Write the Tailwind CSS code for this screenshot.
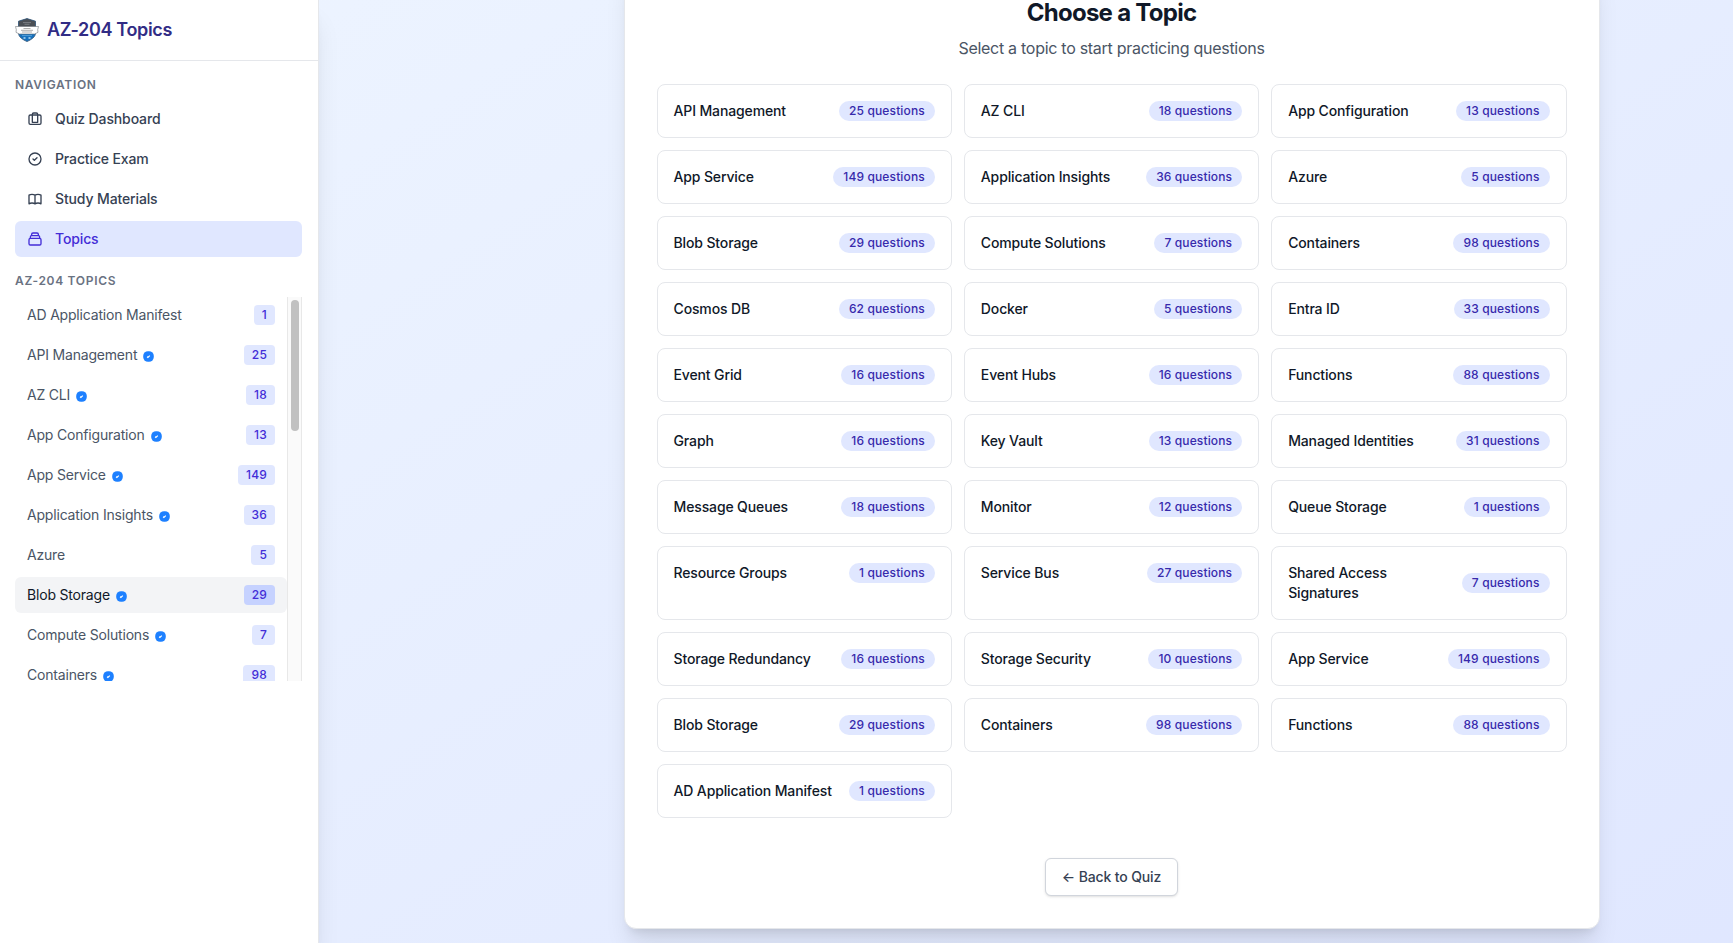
<!DOCTYPE html>
<html lang="en">
<head>
<meta charset="utf-8">
<title>AZ-204 Topics</title>
<script src="https://cdn.jsdelivr.net/npm/@tailwindcss/browser@4"></script>
</head>
<body class="h-[943px] overflow-hidden bg-linear-to-br from-blue-50 to-indigo-100 bg-[length:1733px_1150px] bg-bottom font-['Inter',sans-serif] antialiased">
<div class="flex h-full">
  <aside class="w-[319px] shrink-0 border-r border-gray-200 bg-white shadow-xl">
    <header class="flex h-[61px] items-center gap-2 border-b border-gray-200 px-[15px]">
      <svg class="size-6" viewBox="0 0 24 24">
        <path d="M3.5 3.2 12 .6l8.500 2.600V15c0 4-4 6.500-8.500 8.600C7.500 21.500 3.500 19 3.500 15z" fill="#1671bd"/>
        <path d="M3.500 3.200 12 .6l8.500 2.600V9h-17z" fill="#4b4f55"/>
        <path d="M3.500 3.200 12 .6l8.500 2.600V15c0 4-4 6.500-8.500 8.600C7.500 21.500 3.500 19 3.500 15z" fill="none" stroke="#3c5b78" stroke-width=".8"/>
        <path d="M8 4.600h8M9.500 6.300h5" stroke="#85898e" stroke-width=".8"/>
        <path d="M.5 8.500h23l-.8 3.200.3 2.600-3.200 1.700H4.200L1 14.300l.3-2.600z" fill="#fff" stroke="#70757b" stroke-width=".6"/>
        <path d="M8.500 10.500h7M6 12.300h12M7 14h10" stroke="#8d8d8d" stroke-width=".7"/>
        <path d="M7 17.600h10" stroke="#6eb4e8" stroke-width=".7"/>
        <path d="M8.500 20h2M13.500 20h2" stroke="#b5ddf8" stroke-width="1.500"/>
      </svg>
      <h1 class="text-lg font-semibold tracking-[-0.34px] text-indigo-900">AZ-204 Topics</h1>
    </header>
    <div class="py-4 pr-4 pl-[15px]">
      <h2 class="mb-2 text-xs font-semibold tracking-[0.67px] text-gray-500">NAVIGATION</h2>
      <nav class="flex flex-col gap-1 text-sm font-medium tracking-[-0.13px] text-gray-700">
        <a class="flex h-9 items-center gap-3 rounded-md px-3"><svg class="size-4" viewBox="0 0 24 24" fill="none" stroke="currentColor" stroke-width="2" stroke-linecap="round" stroke-linejoin="round"><path d="M5 6a2 2 0 0 0-2 2v10a2 2 0 0 0 2 2h14a2 2 0 0 0 2-2V8a2 2 0 0 0-2-2M8 6V5a2 2 0 0 1 2-2h4a2 2 0 0 1 2 2v12H8zM5 6h14"/></svg>Quiz Dashboard</a>
        <a class="flex h-9 items-center gap-3 rounded-md px-3"><svg class="size-4" viewBox="0 0 24 24" fill="none" stroke="currentColor" stroke-width="2" stroke-linecap="round" stroke-linejoin="round"><path d="m9 12 2 2 4-4m6 2a9 9 0 1 1-18 0 9 9 0 0 1 18 0z"/></svg>Practice Exam</a>
        <a class="flex h-9 items-center gap-3 rounded-md px-3"><svg class="size-4" viewBox="0 0 24 24" fill="none" stroke="currentColor" stroke-width="2" stroke-linecap="round" stroke-linejoin="round"><path d="M12 6.253v13m0-13C10.832 5.477 9.246 5 7.500 5S4.168 5.477 3 6.253v13C4.168 18.477 5.754 18 7.500 18s3.332.477 4.500 1.253m0-13C13.168 5.477 14.754 5 16.500 5s3.332.477 4.500 1.253v13C19.832 18.477 18.247 18 16.500 18s-3.332.477-4.500 1.253"/></svg>Study Materials</a>
        <a class="flex h-9 items-center gap-3 rounded-md bg-indigo-100 px-3 text-indigo-700"><svg class="size-4" viewBox="0 0 24 24" fill="none" stroke="currentColor" stroke-width="2" stroke-linecap="round" stroke-linejoin="round"><path d="M19 11H5m14 0a2 2 0 0 1 2 2v6a2 2 0 0 1-2 2H5a2 2 0 0 1-2-2v-6a2 2 0 0 1 2-2m14 0V9a2 2 0 0 0-2-2M5 11V9a2 2 0 0 1 2-2m0 0V5a2 2 0 0 1 2-2h6a2 2 0 0 1 2 2v2M7 7h10"/></svg>Topics</a>
      </nav>
      <h2 class="mt-4 mb-2 text-xs font-semibold tracking-[0.69px] text-gray-500">AZ-204 TOPICS</h2>
      <div class="flex h-96 overflow-hidden">
        <div id="topics" class="flex grow flex-col gap-1"></div>
        <div class="h-96 w-[15px] shrink-0 border-x border-[#e8e8e8] bg-[#fafafa] pt-[3px] pl-[3px]">
          <div class="h-[131px] w-2 rounded-full bg-[#c1c1c1]"></div>
        </div>
      </div>
    </div>
  </aside>
  <main class="ml-[304.5px] w-[976px] shrink-0">
    <section class="-mt-[36px] h-[965px] rounded-xl border border-gray-200 bg-white px-8 pt-8 shadow-xl">
      <h2 class="text-center text-2xl font-bold tracking-[-0.72px] text-gray-900">Choose a Topic</h2>
      <p class="mt-[7px] text-center text-base tracking-[-0.28px] text-gray-600">Select a topic to start practicing questions</p>
      <div id="grid" class="mt-6 grid grid-cols-3 gap-3"></div>
      <div class="mt-10 flex justify-center">
        <button class="rounded-md border border-gray-300 bg-white px-4 py-2 text-sm font-medium tracking-[-0.14px] text-gray-700 shadow-sm">← Back to Quiz</button>
      </div>
    </section>
  </main>
</div>
<script>
const check = `<svg class="mt-0.5 size-[11px]" viewBox="0 0 11 11"><rect x=".2" y=".2" width="10.600" height="10.600" rx="4.800" fill="#1d80ff"/><path d="M4.100 5.700l.8.700 1.900-1.800" fill="none" stroke="#fff" stroke-width="1.200"/></svg>`;
const topics = [['AD Application Manifest',1,0],['API Management',25,1],['AZ CLI',18,1],['App Configuration',13,1],['App Service',149,1],['Application Insights',36,1],['Azure',5,0],['Blob Storage',29,1],['Compute Solutions',7,1],['Containers',98,1]];
document.getElementById('topics').innerHTML = topics.map(([name, n, verified]) => {
  const on = name === 'Blob Storage';
  return `<a class="flex h-9 shrink-0 items-center justify-between rounded-md px-3 text-sm tracking-[-0.19px] ${on ? 'bg-gray-100 text-gray-900' : 'text-gray-600'}"><span class="flex items-center gap-1.5">${name}${verified ? check : ''}</span><span class="rounded px-2 py-0.5 text-xs font-medium tracking-[0.2px] text-indigo-700 ${on ? 'bg-indigo-200' : 'bg-indigo-100'}">${n}</span></a>`;
}).join('');
const cards = [['API Management',25],['AZ CLI',18],['App Configuration',13],['App Service',149],['Application Insights',36],['Azure',5],['Blob Storage',29],['Compute Solutions',7],['Containers',98],['Cosmos DB',62],['Docker',5],['Entra ID',33],['Event Grid',16],['Event Hubs',16],['Functions',88],['Graph',16],['Key Vault',13],['Managed Identities',31],['Message Queues',18],['Monitor',12],['Queue Storage',1],['Resource Groups',1],['Service Bus',27],['Shared Access<br>Signatures',7],['Storage Redundancy',16],['Storage Security',10],['App Service',149],['Blob Storage',29],['Containers',98],['Functions',88],['AD Application Manifest',1]];
document.getElementById('grid').innerHTML = cards.map(([name, n]) =>
  `<a class="rounded-lg border border-gray-200 p-4"><div class="flex items-center justify-between"><span class="text-sm font-medium tracking-[-0.13px] text-gray-900">${name}</span><span class="rounded-full bg-indigo-100 px-2.5 py-0.5 text-xs font-medium tracking-[0.13px] whitespace-nowrap text-indigo-800">${n} questions</span></div></a>`
).join('');
</script>
</body>
</html>
